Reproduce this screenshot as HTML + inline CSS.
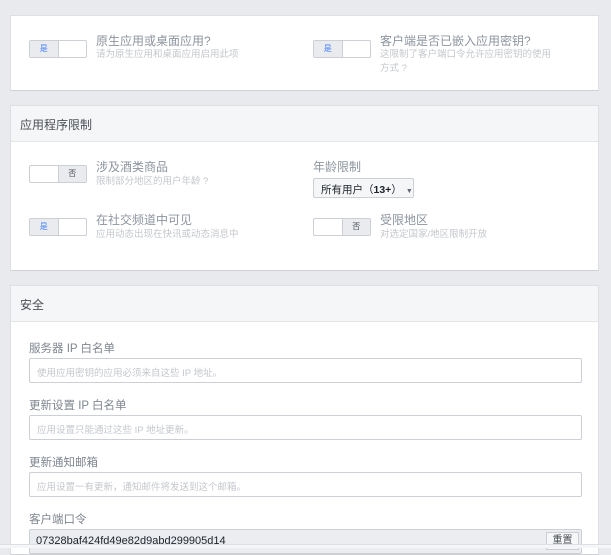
<!DOCTYPE html>
<html><head><meta charset="utf-8"><style>
*{box-sizing:border-box;margin:0;padding:0}
body{width:611px;height:548px;background:#e9eaed;font-family:"Liberation Sans","Noto Sans CJK SC",sans-serif;position:relative;overflow:hidden}
.card{position:absolute;left:10px;width:589px;background:#fff;border:1px solid #dddfe2;border-bottom-color:#d0d1d5}
.hd{position:absolute;left:0;right:0;top:0;height:36px;background:#f5f6f7;border-bottom:1px solid #e5e5e5;font-size:12px;color:#4b4f56;padding:10px 9px}
.a{position:absolute}
.tg{position:absolute;width:58px;height:18px;border:1px solid #ccd0d5;border-radius:2px;display:flex;font-size:8px;line-height:16px;text-align:center}
.tg span{flex:1}
.tg .on{background:#e9ebee;color:#4080ff;border-right:1px solid #ccd0d5}
.tg .off{background:#e9ebee;color:#4b4f56;border-left:1px solid #ccd0d5}
.t{position:absolute;font-size:12px;line-height:14px;color:#8d949e;white-space:nowrap}
.s{position:absolute;font-size:9.5px;color:#c4c7cc;white-space:nowrap;line-height:12px}
.lb{position:absolute;left:18px;font-size:11.5px;color:#7f858f}
.in{position:absolute;left:18px;width:553px;height:25px;border:1px solid #ccd0d5;border-radius:2px;font-size:9.5px;color:#c4c7cc;padding:6px 7px}
</style></head><body>
<div class="card" style="top:15px;height:76px">
 <div class="tg" style="left:18px;top:24px"><span class="on">是</span><span></span></div>
 <div class="t" style="left:85px;top:18px">原生应用或桌面应用?</div>
 <div class="s" style="left:85px;top:33px">请为原生应用和桌面应用启用此项</div>
 <div class="tg" style="left:302px;top:24px"><span class="on">是</span><span></span></div>
 <div class="t" style="left:369px;top:18px">客户端是否已嵌入应用密钥?</div>
 <div class="s" style="left:369px;top:33px">这限制了客户端口令允许应用密钥的使用</div>
 <div class="s" style="left:369px;top:47px">方式 ?</div>
</div>
<div class="card" style="top:105px;height:166px">
 <div class="hd">应用程序限制</div>
 <div class="tg" style="left:18px;top:59px"><span></span><span class="off">否</span></div>
 <div class="t" style="left:85px;top:54px">涉及酒类商品</div>
 <div class="s" style="left:85px;top:70px">限制部分地区的用户年龄 ?</div>
 <div class="t" style="left:302px;top:54px">年龄限制</div>
 <div class="a" style="left:302px;top:72px;width:101px;height:20px;border:1px solid #ccd0d5;border-radius:2px;background:#f5f6f7;font-size:10.5px;color:#1d2129;padding:3px 7px;white-space:nowrap">所有用户（<b>13+</b>）<span style="font-size:7px;color:#606770;margin-left:4px">▼</span></div>
 <div class="tg" style="left:18px;top:112px"><span class="on">是</span><span></span></div>
 <div class="t" style="left:85px;top:107px">在社交频道中可见</div>
 <div class="s" style="left:85px;top:123px">应用动态出现在快讯或动态消息中</div>
 <div class="tg" style="left:302px;top:112px"><span></span><span class="off">否</span></div>
 <div class="t" style="left:369px;top:107px">受限地区</div>
 <div class="s" style="left:369px;top:123px">对选定国家/地区限制开放</div>
</div>
<div class="card" style="top:285px;height:270px">
 <div class="hd">安全</div>
 <div class="lb" style="top:54px">服务器 IP 白名单</div>
 <div class="in" style="top:72px">使用应用密钥的应用必须来自这些 IP 地址。</div>
 <div class="lb" style="top:111px">更新设置 IP 白名单</div>
 <div class="in" style="top:129px">应用设置只能通过这些 IP 地址更新。</div>
 <div class="lb" style="top:168px">更新通知邮箱</div>
 <div class="in" style="top:186px">应用设置一有更新，通知邮件将发送到这个邮箱。</div>
 <div class="lb" style="top:225px">客户端口令</div>
 <div class="in" style="top:243px;background:#ebedf0;color:#1d2129;font-size:11px;padding:5px 6px">07328baf424fd49e82d9abd299905d14
  <div class="a" style="right:2px;top:2px;width:33px;height:18px;border:1px solid #ccd0d5;background:#f5f6f7;font-size:10px;text-align:center;line-height:16px;color:#4b4f56">重置</div></div>
</div>
<div class="a" style="left:0;top:544px;width:611px;height:4px;background:#f5f6f7;border-top:1px solid #dddfe2"></div>
</body></html>
